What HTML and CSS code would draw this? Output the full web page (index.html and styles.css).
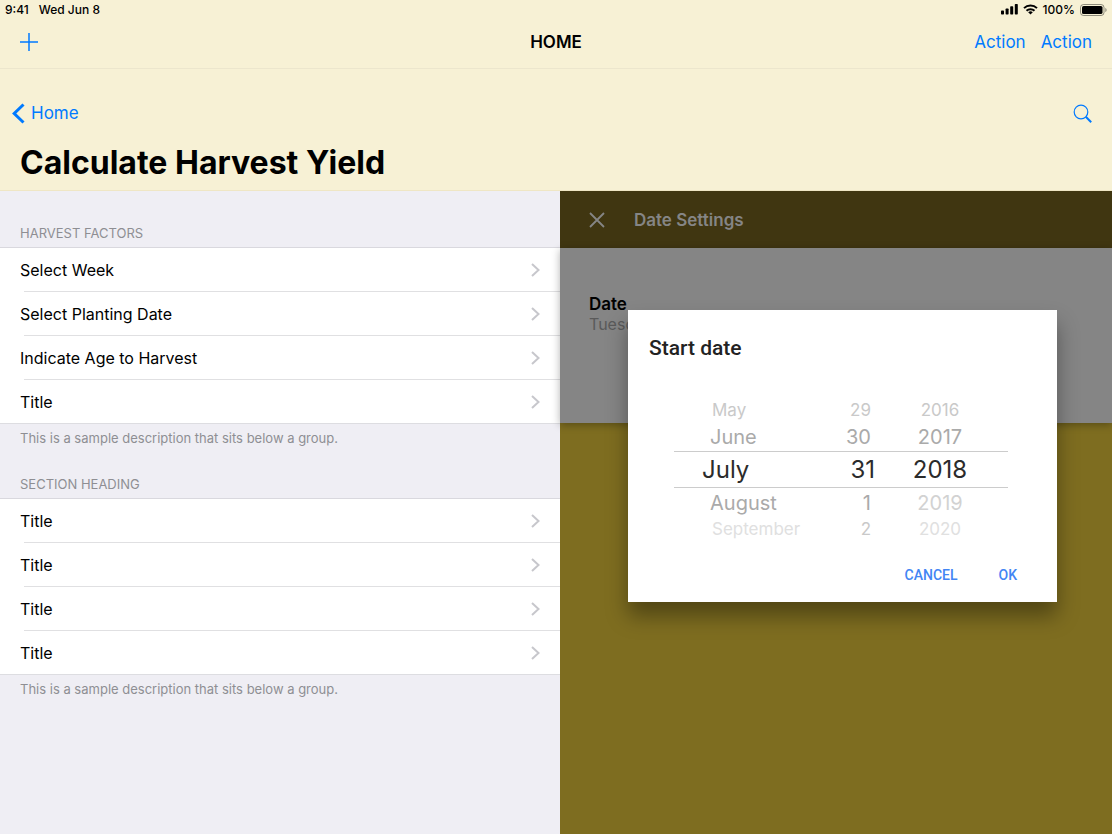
FILE: index.html
```html
<!DOCTYPE html>
<html lang="en">
<head>
<meta charset="utf-8">
<meta name="viewport" content="width=device-width, initial-scale=1">
<title>Calculate Harvest Yield</title>
<link rel="stylesheet" href="styles.css">
</head>
<body>
<svg class="sprite" aria-hidden="true">
  <symbol id="chevron" viewBox="0 0 9 14"><path d="M1 1l6.5 6L1 13" fill="none" stroke="#c7c7cc" stroke-width="2"/></symbol>
</svg>
<div class="screen">
  <header class="top">
    <div class="status">
      <div class="status-group"><span>9:41</span><span>Wed Jun 8</span></div>
      <div class="status-icons">
        <svg width="17" height="11" viewBox="0 0 17 11" aria-hidden="true"><rect x="0" y="6.5" width="3" height="4" rx=".7"/><rect x="4.6" y="4.5" width="3" height="6" rx=".7"/><rect x="9.2" y="2.3" width="3" height="8.2" rx=".7"/><rect x="13.8" y="0" width="3" height="10.5" rx=".7"/></svg>
        <svg width="15" height="11" viewBox="0 0 15 11" aria-hidden="true"><g fill="none" stroke="#000" stroke-width="2"><path d="M1 4.1a9.3 9.3 0 0 1 13 0"/><path d="M3.5 6.8a5.7 5.7 0 0 1 8 0"/></g><path d="M7.5 10.6L5.2 8.3a3.3 3.3 0 0 1 4.6 0z"/></svg>
        <span>100%</span>
        <svg width="27" height="12" viewBox="0 0 27 12" aria-hidden="true"><rect x=".5" y=".5" width="23.5" height="11" rx="3" fill="none" stroke="#000" stroke-opacity=".42"/><rect x="2" y="2" width="20.5" height="8" rx="1.6"/><path d="M25.3 4v4c.8-.3 1.3-1.1 1.3-2s-.5-1.700-1.300-2z" fill-opacity=".42"/></svg>
      </div>
    </div>
    <nav class="bar">
      <div class="bar-side"><button class="link" aria-label="Add"><svg width="18" height="18" viewBox="0 0 18 18"><path d="M9 0v18M0 9h18" stroke="#007aff" stroke-width="1.5"/></svg></button></div>
      <div class="bar-title">HOME</div>
      <div class="bar-side bar-end"><button class="link">Action</button><button class="link">Action</button></div>
    </nav>
    <nav class="back-row">
      <a class="link back" href="#"><svg width="13" height="21" viewBox="0 0 13 21" aria-hidden="true"><path d="M11.500 1.500L2.200 10.500l9.300 9" fill="none" stroke="#007aff" stroke-width="3"/></svg>Home</a>
      <button class="link" aria-label="Search"><svg width="19" height="19" viewBox="0 0 19 19"><circle cx="8" cy="8" r="6.800" fill="none" stroke="#007aff" stroke-width="1.200"/><path d="M12.800 12.800l5.400 5.400" stroke="#007aff" stroke-width="2"/></svg></button>
    </nav>
    <h1 class="title">Calculate Harvest Yield</h1>
  </header>
  <main class="split">
    <section class="list-pane">
      <h2 class="heading">HARVEST FACTORS</h2>
      <ul class="group">
        <li><button class="row">Select Week<svg class="chev"><use href="#chevron"/></svg></button></li>
        <li><button class="row">Select Planting Date<svg class="chev"><use href="#chevron"/></svg></button></li>
        <li><button class="row">Indicate Age to Harvest<svg class="chev"><use href="#chevron"/></svg></button></li>
        <li><button class="row">Title<svg class="chev"><use href="#chevron"/></svg></button></li>
      </ul>
      <p class="note">This is a sample description that sits below a group.</p>
      <h2 class="heading">SECTION HEADING</h2>
      <ul class="group">
        <li><button class="row">Title<svg class="chev"><use href="#chevron"/></svg></button></li>
        <li><button class="row">Title<svg class="chev"><use href="#chevron"/></svg></button></li>
        <li><button class="row">Title<svg class="chev"><use href="#chevron"/></svg></button></li>
        <li><button class="row">Title<svg class="chev"><use href="#chevron"/></svg></button></li>
      </ul>
      <p class="note">This is a sample description that sits below a group.</p>
    </section>
    <section class="detail">
      <header class="detail-bar">
        <button class="close" aria-label="Close"><svg width="16" height="16" viewBox="0 0 16 16"><path d="M1 1l14 14M15 1L1 15" stroke="#858585" stroke-width="1.800"/></svg></button>
        <h2 class="detail-title">Date Settings</h2>
      </header>
      <div class="card">
        <div class="card-label">Date</div>
        <div class="card-value">Tuesday</div>
      </div>
      <div class="dialog" role="dialog" aria-labelledby="dialog-title">
        <h2 class="dialog-title" id="dialog-title">Start date</h2>
        <div class="picker">
          <ul class="wheel">
            <li class="far">May</li><li class="near">June</li><li class="current">July</li><li class="near">August</li><li class="far low">September</li>
          </ul>
          <ul class="wheel day">
            <li class="far">29</li><li class="near">30</li><li class="current">31</li><li class="near">1</li><li class="far">2</li>
          </ul>
          <ul class="wheel year">
            <li class="far">2016</li><li class="near">2017</li><li class="current">2018</li><li class="near faded">2019</li><li class="far low">2020</li>
          </ul>
        </div>
        <div class="dialog-actions"><button class="text-button">CANCEL</button><button class="text-button">OK</button></div>
      </div>
    </section>
  </main>
</div>
</body>
</html>
```
FILE: styles.css
```css
* { box-sizing: border-box; }
body { margin: 0; font-family: Inter, "Liberation Sans", sans-serif; font-size: 16px; color: #000; }
button { border: 0; padding: 0; background: none; font: inherit; color: inherit; cursor: pointer; }
h1, h2, p, ul { margin: 0; padding: 0; }
ul { list-style: none; }
svg { display: block; flex: none; }
.sprite { position: absolute; width: 0; height: 0; }
.screen { min-height: 100vh; display: flex; flex-direction: column; }

.top { background: #f7f1d5; border-bottom: 1px solid #efe6c4; }
.status { display: flex; justify-content: space-between; align-items: center; height: 20px; padding: 0 5px 1px; font-size: 12px; font-weight: 500; }
.status-group { display: flex; gap: 10px; }
.status-icons { display: flex; align-items: center; gap: 5px; }
.bar { display: grid; grid-template-columns: 1fr auto 1fr; align-items: center; height: 49px; padding: 0 20px 4px; border-bottom: 1px solid #ece6cd; font-size: 17px; }
.bar-side { display: flex; align-items: center; gap: 15px; }
.bar-end { justify-content: flex-end; }
.bar-title { font-size: 17px; font-weight: 600; }
.link { color: #007aff; text-decoration: none; }
.back-row { display: flex; align-items: center; justify-content: space-between; height: 44px; margin-top: 22px; padding: 0 20px 0 12px; font-size: 17px; }
.back { display: flex; align-items: center; gap: 6px; }
.title { padding: 8px 20px 7px; font-size: 32px; line-height: 40px; font-weight: 700; }

.split { flex: 1; display: grid; grid-template-columns: 560fr 552fr; }
.list-pane { background: #efeef4; padding-top: 32px; }
.heading { padding: 0 20px 4px; font-size: 13px; line-height: 20px; font-weight: 400; color: #8e8e93; }
.group { background: #fff; border-top: 1px solid #d9d8de; border-bottom: 1px solid #dddde1; }
.group li { padding-left: 20px; }
.group li + li { margin-left: 24px; padding-left: 0; border-top: 1px solid #e0e0e2; }
.group li + li .row { margin-left: -4px; width: calc(100% + 4px); }
.row { display: flex; align-items: center; justify-content: space-between; width: 100%; height: 43px; padding-right: 20px; text-align: left; }
.chev { width: 9px; height: 14px; }
.note { padding: 4px 20px 26px; font-size: 13px; line-height: 20px; color: #8e8e93; }

.detail { position: relative; background: #7e6d20; }
.detail-bar { display: flex; align-items: center; gap: 29px; height: 57px; padding: 0 29px; background: #403611; color: #858585; }
.detail-title { font-size: 17px; font-weight: 600; }
.card { height: 175px; padding: 46px 29px; background: #858585; box-shadow: 0 2px 8px rgba(0, 0, 0, .3); line-height: 20px; }
.card-label { font-size: 17px; font-weight: 600; }
.card-value { color: #5a5a5a; }

.dialog { position: absolute; top: 119px; left: 68px; width: 429px; padding: 24px 21px 10px; background: #fff; color: #222; box-shadow: 0 14px 20px rgba(0, 0, 0, .36); font-family: Roboto, sans-serif; }
.dialog-title { font-size: 21px; line-height: 28px; font-weight: 500; }
.picker { display: grid; grid-template-columns: 150px 51px 133px; margin: 36px 25px 0; font-family: Inter, "Liberation Sans", sans-serif; }
.wheel li { display: flex; align-items: center; }
.wheel .far { height: 24px; padding-left: 38px; font-size: 17px; color: #c9c9c9; }
.wheel .near { height: 29px; padding-left: 36px; font-size: 20px; color: #aaa; }
.wheel .current { height: 37px; padding-left: 28px; border: solid #ccc; border-width: 1px 0; font-size: 24px; color: #2b2b2b; }
.wheel .low { color: #e0e0e0; }
.wheel .faded { color: #d2d2d2; }
.wheel.day li { justify-content: flex-end; padding: 0 4px 0 0; }
.wheel.day .current { padding: 0; }
.wheel.year li { justify-content: center; padding: 0 3px 0 0; }
.dialog-actions { display: flex; justify-content: flex-end; gap: 41px; margin-top: 17px; padding-right: 19px; font-size: 14px; font-weight: 500; color: #4285f4; }
.text-button { height: 34px; }
```
